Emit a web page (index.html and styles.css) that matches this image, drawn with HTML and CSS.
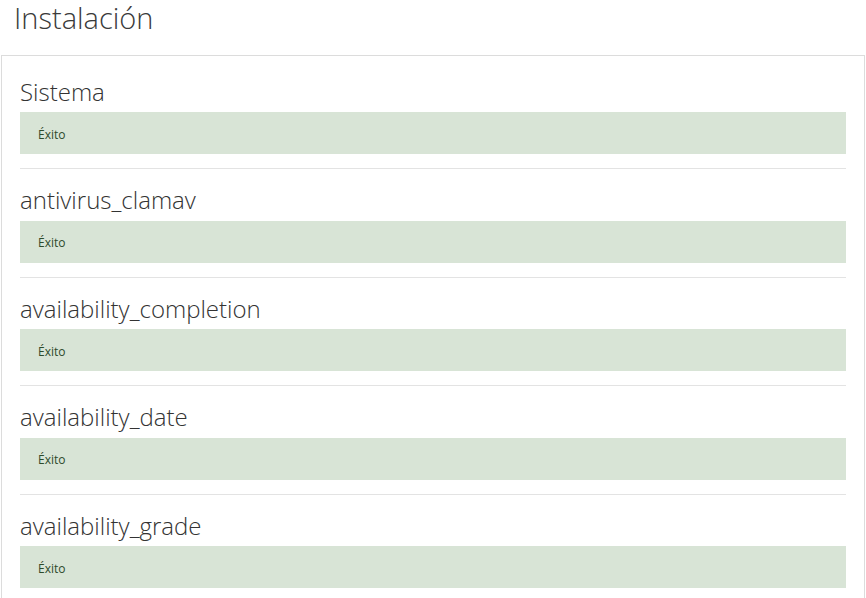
FILE: index.html
```html
<!DOCTYPE html>
<html lang="es">
<head>
<meta charset="utf-8">
<title>Instalación</title>
<link rel="stylesheet" href="styles.css">
</head>
<body>
<div class="page">
  <h2 class="title">Instalación</h2>
  <div class="box">
    <section class="item">
      <h3 class="item-title">Sistema</h3>
      <div class="alert">Éxito</div>
    </section>
    <section class="item">
      <h3 class="item-title">antivirus_clamav</h3>
      <div class="alert">Éxito</div>
    </section>
    <section class="item">
      <h3 class="item-title">availability_completion</h3>
      <div class="alert">Éxito</div>
    </section>
    <section class="item">
      <h3 class="item-title">availability_date</h3>
      <div class="alert">Éxito</div>
    </section>
    <section class="item">
      <h3 class="item-title">availability_grade</h3>
      <div class="alert">Éxito</div>
    </section>
  </div>
</div>
</body>
</html>
```

FILE: styles.css
```css
html, body {
  margin: 0;
  padding: 0;
  background: #fff;
}
body {
  font-family: "Open Sans", "Noto Sans", sans-serif;
  color: #333;
}
.page {
  padding: 0 1px;
}
.title {
  margin: 0;
  padding: 0 0 0 13px;
  font-size: 29px;
  font-weight: 300;
  line-height: 36px;
  color: #3a3a3a;
  height: 55px;
  box-sizing: border-box;
}
.box {
  border: 1px solid #dcdcdc;
  padding: 4.5px 18px 0;
}
.item {
  border-bottom: 1px solid #e3e3e3;
  padding-bottom: 14px;
}
.item-title {
  margin: 16px 0 6.5px;
  font-size: 24px;
  font-weight: 300;
  line-height: 29px;
  color: #333;
}
.alert {
  background: #d8e4d6;
  color: #2d4a2b;
  height: 42px;
  box-sizing: border-box;
  padding: 2px 18px 0;
  display: flex;
  align-items: center;
  font-size: 12px;
}
```
